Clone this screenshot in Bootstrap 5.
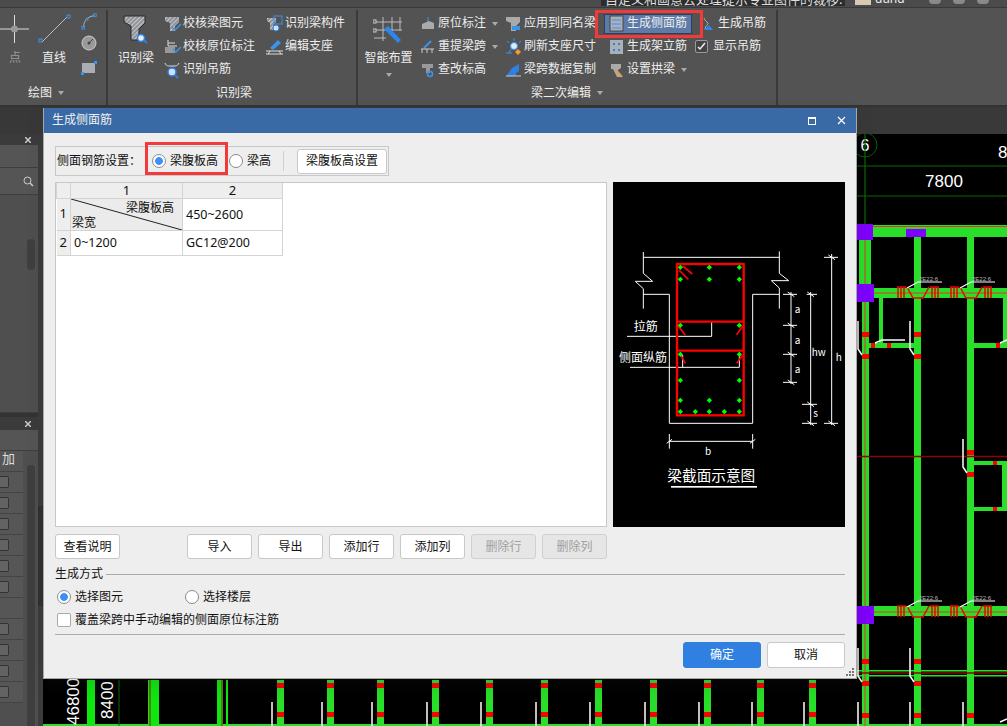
<!DOCTYPE html>
<html lang="zh-CN">
<head>
    <meta charset="UTF-8">
    <meta name="viewport" content="width=device-width, initial-scale=1.0">
    <title>生成侧面筋</title>
    <link href="https://cdn.jsdelivr.net/npm/bootstrap@5.3.0/dist/css/bootstrap.min.css" rel="stylesheet">
    <style>
        body { margin: 0; background: #000; font: 12px/1.2 "Noto Sans", "Noto Sans CJK SC", sans-serif; }
        .app { position: relative; width: 1007px; height: 726px; overflow: hidden; }

        /* ribbon */
        .ribbon { height: 107px; background: #535353; color: #eee; border-bottom: 2px solid #333; }
        .rb-top { height: 8px; background: #4b4b4b; border-bottom: 1px solid #383838; }
        .rb-notice { margin-left: 601px; width: 244px; height: 6px; background: #2d2d2d; overflow: hidden; color: #ddd; white-space: nowrap; }
        .rb-notice span { display: block; margin: -8px 0 0 4px; font-size: 13px; }
        .rb-avatar { width: 16px; height: 5px; margin-left: 10px; background: #d9c9b4; }
        .rb-user { margin: -8px 0 0 4px; font-size: 12px; }
        .rb-tool { width: 12px; height: 4px; background: #8a8a8a; margin-left: 12px; border-radius: 0 0 5px 5px; }
        .rb-group { height: 95px; border-right: 2px solid #3a3a3a; margin-top: 2px; }
        .rb-g1 { width: 108px; }
        .rb-g2 { width: 250px; }
        .rb-g3 { width: 420px; }
        .rb-body { height: 71px; flex: none; margin-top: 2px; }
        .rb-label { height: 20px; }
        .lb-g1 { padding-right: 14px; }
        .lb-g2 { padding-left: 4px; }
        .lb-g3 { padding-left: 173px; }
        .rb-arrow { width: 0; height: 0; border: 3px solid transparent; border-top: 4px solid #aaa; border-bottom: 0; margin-left: 6px; flex: none; }
        .rb-big { flex: none; }
        .rb-big span { margin-top: 7px; }
        .rb-row { height: 23px; white-space: nowrap; }
        .rb-row svg { flex: none; }
        .rb-ic { width: 18px; height: 18px; margin-right: 1px; }
        .rb-dim { color: #9a9a9a; }
        .w-pt { width: 30px; }
        .w-ln { width: 48px; }
        .w-sm { width: 22px; }
        .w-beam { width: 56px; }
        .w-c1 { width: 102px; }
        .w-smart { width: 61px; }
        .w-a { width: 86px; }
        .w-b { width: 103px; }
        .w-c { width: 88px; }
        .rb-hl { background: #5d7ba6; border: 1px solid #2d3f5c; height: 20px; margin-left: -4px; padding-left: 3px; width: 88px; }
        .rb-check { width: 13px; height: 13px; border: 1px solid #9a9a9a; border-radius: 2px; background: #444; margin-right: 5px; flex: none; }
        .rb-col4 { margin-left: -1px; }
        .rb-col4 .rb-ic { margin: 0 2px 0 3px; width: 14px; }

        /* red marks drawn over the shot */
        .red-frame { position: absolute; border: 3px solid #f23a3a; pointer-events: none; }
        .rf-ribbon { left: 595px; top: 10px; width: 108px; height: 28px; }
        .rf-radio { left: 145px; top: 142px; width: 83px; height: 33px; }

        /* left panels */
        .side { width: 43px; flex: none; background: #3c3c3c; color: #ddd; }
        .side-top { height: 27px; background: #383838; }
        .side-inner { width: 38px; background: #4f4f4f; }
        .side-head { height: 11px; background: #3b3b3b; padding-right: 7px; }
        .side-head-b { height: 13px; }
        .side-head svg { display: block; }
        .side-bar { background: #555; border-bottom: 1px solid #3e3e3e; }
        .side-h1 { height: 23px; }
        .side-h2 { height: 27px; }
        .side-h3 { height: 21px; }
        .side-fill { height: 218px; position: relative; border-bottom: 1px solid #3e3e3e; }
        .thumb { position: absolute; left: 27px; width: 8px; background: #3f3f3f; border-radius: 4px; }
        .thumb-a { top: 44px; height: 31px; }
        .thumb-b { top: 14px; height: 280px; }
        .side-gap { height: 4px; background: #333; }
        .side-list { position: relative; height: 275px; }
        .side-cell { height: 21px; width: 23px; border-bottom: 1px solid #444; background: #565656; }
        .side-cell i { display: block; width: 9px; height: 12px; background: #636363; border: 1px solid #333; border-left: 0; border-radius: 0 2px 2px 0; }
        .side-title { font-size: 13px; padding-left: 2px; height: 21px; }
        .side-handle { width: 5px; height: 100px; background: #303030; position: absolute; left: 38px; top: 506px; }

        /* canvas */
        .cad-wrap { flex: 1 1 auto; }
        .cad-band { height: 27px; background: #393939; }
        .cad { display: block; background: #000; }
        .cad text { font-family: "Liberation Sans", sans-serif; fill: #fff; }

        /* dialog */
        .dlg { position: absolute; left: 43px; top: 108px; width: 814px; height: 571px; background: #eee; border: 1px solid #a8a8a8; border-top: 0; color: #111; }
        .dlg-title { height: 25px; background: #3a6aa5; color: #f0f0f0; padding: 0 10px 0 8px; flex: none; }
        .dlg-body { padding: 13px 11px 0 11px; }
        .set-bar { height: 30px; width: 334px; border: 1px solid #c8c8c8; padding-left: 1px; }
        .set-sep { width: 1px; height: 20px; background: #d0d0d0; margin: 0 13px 0 12px; }
        .dlg .form-check-input { width: 14px; height: 14px; margin: 0 4px 0 0; flex: none; border-color: #8a8a8a; background: #fff; box-shadow: none; }
        .dlg .form-check-input:checked { background: radial-gradient(circle, #3f90f5 0 3.5px, #fff 4.2px); border-color: #8a8f99; }
        .dlg .form-check-input[type=checkbox] { border-radius: 2px; width: 14px; height: 14px; border-color: #aaa; }
        .dlg .lbl-gap { margin-left: 11px; }
        .dlg .btn { font-size: 12px; line-height: 1; padding: 0; height: 25px; color: #111; background: #fff; border: 1px solid #c8c8c8; border-radius: 3px; }
        .dlg .btn.disabled, .dlg .btn:disabled { background: #e6e6e6; color: #a0a0a0; border-color: #d0d0d0; opacity: 1; }
        .dlg .btn-primary { background: #2f80e0; border-color: #2f80e0; color: #fff; }
        .btn-set { width: 90px; }
        .btn-w65 { width: 65px; }
        .dlg .btn-w78 { width: 78px; height: 26px; }
        .main-row { height: 345px; margin-top: 6px; }
        .grid-box { width: 552px; background: #fff; border: 1px solid #c8c8c8; }
        .pic-box { width: 232px; background: #000; margin-left: 6px; }
        .pic-box svg { display: block; }
        .pic-box text { font-family: "Noto Sans CJK SC", sans-serif; fill: #fff; }
        .rb-table { width: 227px; table-layout: fixed; border-collapse: collapse; font-size: 12px; margin: 0; --bs-table-bg: transparent; }
        .rb-table th, .rb-table td { border: 1px solid #d4d4d4; padding: 0 3px; font-weight: 400; vertical-align: middle; color: #111; }
        .rb-table td { font-family: "Noto Sans", sans-serif; font-size: 12.5px; }
        .rb-table thead th { background: #eee; height: 15px; text-align: center; font-size: 13px; line-height: 1; padding: 0; border-top: 0; }
        .rb-table tbody th { background: #eee; text-align: center; padding: 0; font-size: 13px; border-left: 0; }
        .col-no { width: 14px; }
        .col-a { width: 112px; }
        .row-one { height: 32px; }
        .row-two { height: 25px; }
        .rb-table td.diag { position: relative; background: #ebebeb; padding: 0; font-family: "Noto Sans CJK SC", sans-serif; font-size: 12px; }
        .diag svg { position: absolute; inset: 0; }
        .diag-a { position: absolute; right: 8px; top: 1px; }
        .diag-b { position: absolute; left: 1px; bottom: 0; }
        .act-row { margin-top: 7px; gap: 6px; }
        .act-gap { margin-left: 61px; }
        .gen-head { margin-top: 8px; height: 15px; }
        .gen-head hr { flex: 1 1 auto; margin: 0 0 0 3px; border: 0; border-top: 1px solid #aaa; opacity: 1; }
        .gen-opts { margin-top: 8px; height: 14px; padding-left: 2px; }
        .dlg .gen-second { margin-left: 62px; }
        .gen-cover { margin-top: 9px; height: 14px; padding-left: 2px; }
        .gen-line { margin: 7px 0 0; border: 0; border-top: 1px solid #aaa; opacity: 1; }
        .gen-foot { margin-top: 7px; gap: 6px; }
        .grip { position: absolute; right: 2px; bottom: 2px; }
    </style>
</head>
<body>
<div class="app d-flex flex-column">

    <header class="ribbon flex-shrink-0">
        <div class="rb-top d-flex overflow-hidden">
            <div class="rb-notice"><span>自定义和画意去处理提示专业图件的裁移:</span></div>
            <div class="rb-avatar"></div>
            <div class="rb-user">dund</div>
            <div class="rb-tool ms-4"></div>
            <div class="rb-tool"></div>
            <div class="rb-tool"></div>
        </div>
        <div class="d-flex">
            <!-- 绘图 -->
            <section class="rb-group rb-g1 d-flex flex-column">
                <div class="rb-body d-flex">
                    <div class="rb-big w-pt d-flex flex-column align-items-center">
                        <svg width="30" height="32" viewBox="0 0 30 32"><path d="M0 17h29M14.500 3v28" stroke="#ddd"/><circle cx="14.500" cy="17" r="3.500" fill="#999"/></svg>
                        <span class="rb-dim">点</span>
                    </div>
                    <div class="rb-big w-ln d-flex flex-column align-items-center">
                        <svg width="36" height="32" viewBox="0 0 36 32"><path d="M6 30L31 5" stroke="#bbb"/><rect x="3" y="27" width="3" height="3" fill="none" stroke="#3a94ee"/><rect x="31" y="3" width="3" height="3" fill="none" stroke="#3a94ee"/></svg>
                        <span>直线</span>
                    </div>
                    <div class="w-sm d-flex flex-column align-items-center">
                        <svg width="18" height="18" viewBox="0 0 18 20"><path d="M3 17C3 9 8 5 15 4" stroke="#bbb" fill="none"/><rect x="1" y="16" width="3" height="3" fill="none" stroke="#3a94ee"/><rect x="14" y="2" width="3" height="3" fill="none" stroke="#3a94ee"/><rect x="6" y="7" width="2" height="2" fill="none" stroke="#3a94ee"/></svg>
                        <svg class="mt-1" width="18" height="18" viewBox="0 0 18 18"><circle cx="9" cy="9" r="7" fill="#999" stroke="#ccc"/><circle cx="9" cy="9" r="1.500" fill="#444"/><path d="M9 9l4-4" stroke="#444"/></svg>
                        <svg class="mt-2" width="18" height="16" viewBox="0 0 18 16"><rect x="2" y="3" width="13" height="10" fill="#a9adb5"/><rect x="14" y="1" width="3" height="3" fill="#3a94ee"/><rect x="1" y="12" width="3" height="3" fill="#3a94ee"/></svg>
                    </div>
                </div>
                <div class="rb-label lb-g1 d-flex align-items-center justify-content-center">绘图<i class="rb-arrow"></i></div>
            </section>

            <!-- 识别梁 -->
            <section class="rb-group rb-g2 d-flex flex-column">
                <div class="rb-body d-flex">
                    <div class="rb-big w-beam d-flex flex-column align-items-center">
                        <svg width="26" height="32" viewBox="0 0 26 32"><defs><pattern id="hatch" width="3" height="3" patternUnits="userSpaceOnUse" patternTransform="rotate(45)"><rect width="3" height="3" fill="#8f9298"/><rect width="1" height="3" fill="#c6c8cc"/></pattern></defs><path d="M1 4h21v7l-6 6v11H8V14L1 10z" fill="url(#hatch)" stroke="#2a2a2a"/><circle cx="18" cy="26" r="3.500" fill="#e6eefb" stroke="#2f80e0" stroke-width="1.500"/><path d="M21 28l3 3" stroke="#2f80e0" stroke-width="2"/></svg>
                        <span>识别梁</span>
                    </div>
                    <div class="w-c1 d-flex flex-column">
                        <div class="rb-row d-flex align-items-center"><svg class="rb-ic" viewBox="0 0 18 18"><path d="M1 2h14v5l-4 4v5H6V8L1 6z" fill="url(#hatch)"/><path d="M8 12l3 3 6-6" stroke="#3a94ee" stroke-width="1.500" fill="none"/></svg>校核梁图元</div>
                        <div class="rb-row d-flex align-items-center"><svg class="rb-ic" viewBox="0 0 18 18"><path d="M4 2v6h9M4 5h7" stroke="#ddd" fill="none"/><rect x="1" y="9" width="10" height="6" fill="#999"/><path d="M9 11l3 3 5-5" stroke="#3a94ee" stroke-width="1.500" fill="none"/></svg>校核原位标注</div>
                        <div class="rb-row d-flex align-items-center"><svg class="rb-ic" viewBox="0 0 18 18"><path d="M1 2c1 3 3 3 4 3h6c2 0 3-1 4-3" stroke="#ddd" fill="none"/><circle cx="8" cy="11" r="4" fill="#cfdff5" stroke="#2f80e0" stroke-width="1.500"/><path d="M11 14l3 3" stroke="#2f80e0" stroke-width="2"/></svg>识别吊筋</div>
                    </div>
                    <div class="d-flex flex-column">
                        <div class="rb-row d-flex align-items-center"><svg class="rb-ic" viewBox="0 0 18 18"><path d="M1 3h9v4l-3 3v5H4V8L1 6z" fill="url(#hatch)"/><rect x="8" y="1" width="8" height="8" fill="none" stroke="#3a94ee"/><circle cx="10" cy="13" r="3" fill="#cfdff5" stroke="#2f80e0"/></svg>识别梁构件</div>
                        <div class="rb-row d-flex align-items-center"><svg class="rb-ic" viewBox="0 0 18 18"><path d="M4 10l8-8 3 3-8 7z" fill="#3a94ee"/><path d="M0 13h17M0 16h17M4 13l-2 3M13 13l2 3" stroke="#ddd" fill="none"/></svg>编辑支座</div>
                    </div>
                </div>
                <div class="rb-label lb-g2 d-flex align-items-center justify-content-center">识别梁</div>
            </section>

            <!-- 梁二次编辑 -->
            <section class="rb-group rb-g3 d-flex flex-column">
                <div class="rb-body d-flex">
                    <div class="rb-big w-smart d-flex flex-column align-items-center">
                        <svg width="32" height="32" viewBox="0 -4 32 32"><path d="M1 6h28M1 14h28M1 22h12M10 1v24M19 1v14M27 1v14" stroke="#bbb" fill="none"/><rect x="0" y="4" width="3" height="3" fill="#555" stroke="#ccc"/><rect x="0" y="13" width="3" height="3" fill="#555" stroke="#ccc"/><path d="M11 13l4-3 13 14-3 3z" fill="#2f86e8"/></svg>
                        <span>智能布置</span>
                        <i class="rb-arrow mt-2 ms-0"></i>
                    </div>
                    <div class="w-a d-flex flex-column">
                        <div class="rb-row d-flex align-items-center"><svg class="rb-ic" viewBox="0 0 18 18"><path d="M9 2v6" stroke="#3a94ee"/><path d="M3 9l7-3 5 2v6H3z" fill="#aaa"/></svg>原位标注<i class="rb-arrow"></i></div>
                        <div class="rb-row d-flex align-items-center"><svg class="rb-ic" viewBox="0 0 18 18"><path d="M5 10l7-7" stroke="#3a94ee" stroke-width="2"/><path d="M2 11h13M3 11v4M8 11v4M13 11v4" stroke="#ccc" fill="none"/></svg>重提梁跨<i class="rb-arrow"></i></div>
                        <div class="rb-row d-flex align-items-center"><svg class="rb-ic" viewBox="0 0 18 18"><path d="M3 3h11v4h-3v5H7V7H3z" fill="#999"/><circle cx="11" cy="13" r="2.500" fill="none" stroke="#3a94ee" stroke-width="1.500"/></svg>查改标高</div>
                    </div>
                    <div class="w-b d-flex flex-column">
                        <div class="rb-row d-flex align-items-center"><svg class="rb-ic" viewBox="0 0 18 18"><path d="M1 2h14v5l-4 4v5H6V8L1 6z" fill="#aaa"/><path d="M7 11h8v4H7z" fill="#3a94ee"/></svg>应用到同名梁</div>
                        <div class="rb-row d-flex align-items-center"><svg class="rb-ic" viewBox="0 0 18 18"><circle cx="9" cy="8" r="3.500" fill="#ddeaff" stroke="#3a94ee"/><path d="M9 0v3M2 3l2 2M16 3l-2 2M1 15h6M4 15l2-4" stroke="#3a94ee" fill="none"/><path d="M13 11l3 3-3 3-3-3z" fill="#f39c2c"/></svg>刷新支座尺寸</div>
                        <div class="rb-row d-flex align-items-center"><svg class="rb-ic" viewBox="0 0 18 18"><path d="M2 14l5-7 7-4v7l-3 2v3H2z" fill="#2f80e0"/><path d="M1 15h15" stroke="#ccc"/></svg>梁跨数据复制</div>
                    </div>
                    <div class="w-c d-flex flex-column">
                        <div class="rb-row d-flex align-items-center"><div class="rb-hl d-flex align-items-center"><svg class="rb-ic" viewBox="0 0 18 18"><rect x="2" y="1" width="13" height="15" fill="#aab0b8" stroke="#444"/><path d="M4 5h9M4 9h9M4 13h9" stroke="#3f90f5"/></svg>生成侧面筋</div></div>
                        <div class="rb-row d-flex align-items-center"><svg class="rb-ic" viewBox="0 0 18 18"><rect x="2" y="2" width="13" height="14" fill="#aab0b8"/><path d="M5 5h2v2H5zM10 5h2v2h-2zM5 11h2v2H5zM10 11h2v2h-2z" fill="#2f80e0"/></svg>生成架立筋</div>
                        <div class="rb-row d-flex align-items-center"><svg class="rb-ic" viewBox="0 0 18 18"><path d="M3 3h10v4l-3 2v2l3 5H9L5 8H3z" fill="#aaa"/><path d="M8 9l6 7" stroke="#d8a050" stroke-width="2"/></svg>设置拱梁<i class="rb-arrow"></i></div>
                    </div>
                    <div class="rb-col4 d-flex flex-column">
                        <div class="rb-row d-flex align-items-center ps-1"><svg class="rb-ic" viewBox="0 0 14 18"><path d="M2 3c1 3 3 4 4 5s-3 3-3 6" stroke="#aaa" fill="none"/><path d="M2 15h9l-4-5z" fill="#2f86e8"/></svg>生成吊筋</div>
                        <div class="rb-row d-flex align-items-center"><span class="rb-check d-flex align-items-center justify-content-center"><svg width="9" height="9" viewBox="0 0 9 9"><path d="M1 5l2 2 5-6" stroke="#eee" stroke-width="1.500" fill="none"/></svg></span>显示吊筋</div>
                    </div>
                </div>
                <div class="rb-label lb-g3 d-flex align-items-center"><span>梁二次编辑</span><i class="rb-arrow"></i></div>
            </section>
        </div>
    </header>

    <div class="d-flex flex-grow-1">
        <aside class="side">
            <div class="side-top"></div>
            <div class="side-inner">
                <div class="side-head d-flex justify-content-end align-items-center"><svg width="6" height="6" viewBox="0 0 6 6"><path d="M0 0l6 6M6 0L0 6" stroke="#ccc" stroke-width="1.500"/></svg></div>
                <div class="side-bar side-h1"></div>
                <div class="side-bar side-h2 d-flex justify-content-end align-items-center pe-1"><svg width="11" height="11" viewBox="0 0 11 11"><circle cx="4.500" cy="4.500" r="3.500" fill="none" stroke="#ccc"/><path d="M7 7l3 3" stroke="#ccc" stroke-width="1.500"/></svg></div>
                <div class="side-fill"><div class="thumb thumb-a"></div></div>
                <div class="side-gap"></div>
                <div class="side-head side-head-b d-flex justify-content-end align-items-center"><svg width="6" height="6" viewBox="0 0 6 6"><path d="M0 0l6 6M6 0L0 6" stroke="#ccc" stroke-width="1.500"/></svg></div>
                <div class="side-bar side-h3"></div>
                <div class="side-list">
                    <div class="thumb thumb-b"></div>
                    <div class="side-cell side-title">加</div>
                    <div class="side-cell d-flex align-items-center"><i></i></div>
                    <div class="side-cell d-flex align-items-center"><i></i></div>
                    <div class="side-cell d-flex align-items-center"><i></i></div>
                    <div class="side-cell d-flex align-items-center"><i></i></div>
                    <div class="side-cell d-flex align-items-center"><i></i></div>
                    <div class="side-cell d-flex align-items-center"><i></i></div>
                    <div class="side-cell"></div>
                    <div class="side-cell d-flex align-items-center"><i></i></div>
                    <div class="side-cell d-flex align-items-center"><i></i></div>
                    <div class="side-cell d-flex align-items-center"><i></i></div>
                    <div class="side-cell d-flex align-items-center"><i></i></div>
                </div>
            </div>
        </aside>
        <div class="side-handle"></div>

        <main class="cad-wrap">
            <div class="cad-band"></div>
            <svg class="cad" width="964" height="592" viewBox="43 134 964 592">
                <defs>
                    <g id="trap">
                        <path d="M0 0h9M1 0v11M4 0v11M7 0v11M33 0h9M35 0v11M38 0v11M41 0v11M10 0l6 11h10l6-11" stroke="#f00200" stroke-width="1.500" fill="none"/>
                        <path d="M10 1l11-6h24" stroke="#fff" stroke-width="1.200" fill="none"/>
                        <text x="22" y="-6" font-size="6" style="fill:#bbb">2E22:6</text>
                    </g>
                    <g id="stub">
                        <rect x="0" y="0" width="7" height="5" fill="#f00"/>
                        <rect x="0" y="22" width="7" height="5" fill="#f00"/>
                        <path d="M-4 -11V17L0 23" stroke="#fff" stroke-width="1.500" fill="none"/>
                    </g>
                    <g id="foot">
                        <rect x="0" y="0" width="7" height="44" fill="#2adf2a"/>
                        <rect x="0" y="3" width="7" height="5" fill="#f00"/>
                        <rect x="0" y="32" width="7" height="5" fill="#f00"/>
                        <path d="M-5 22V46" stroke="#fff" stroke-width="1.500"/>
                    </g>
                </defs>

                <!-- axis marks -->
                <circle cx="865" cy="145" r="12" fill="none" stroke="#075f07"/>
                <text x="865" y="151" text-anchor="middle" font-size="16">6</text>
                <text x="998" y="158" font-size="17">8</text>
                <path d="M857 166H1007M857 196H1007M865 134V240" stroke="#0a6a0a" stroke-width="1.200"/>
                <text x="944" y="187" text-anchor="middle" font-size="17">7800</text>

                <!-- beams -->
                <g fill="#2adf2a">
                    <rect x="859" y="225" width="148" height="12"/>
                    <rect x="859" y="237" width="12" height="47"/>
                    <rect x="862" y="302" width="7" height="422"/>
                    <rect x="914" y="237" width="7" height="487"/>
                    <rect x="967" y="237" width="7" height="487"/>
                    <rect x="859" y="288" width="148" height="10"/>
                    <rect x="879" y="298" width="4" height="46"/>
                    <rect x="868" y="343" width="46" height="5"/>
                    <rect x="973" y="343" width="34" height="5"/>
                    <rect x="1003" y="298" width="4" height="46"/>
                    <rect x="973" y="461" width="34" height="4"/>
                    <rect x="973" y="507" width="34" height="4"/>
                    <rect x="1002" y="465" width="5" height="42"/>
                    <rect x="859" y="606" width="148" height="10"/>
                    <rect x="857" y="670" width="150" height="1.500"/>
                    <rect x="857" y="675" width="150" height="1.500"/>
                    <rect x="43" y="724" width="964" height="2"/>
                </g>
                <path d="M857 226.500H1007M857 293H1007M857 612H1007M865 237V726" stroke="#e83030" fill="none"/>
                <path d="M857 456.500H1007M857 673H1007" stroke="#8a0606" stroke-width="1.500"/>

                <g fill="#8000ff">
                    <rect x="857" y="224" width="16" height="16"/>
                    <rect x="906" y="229" width="20" height="8"/>
                    <rect x="857" y="284" width="17" height="18"/>
                    <rect x="857" y="606" width="17" height="18"/>
                </g>

                <use href="#trap" x="897" y="287"/>
                <use href="#trap" x="950" y="287"/>
                <use href="#trap" x="897" y="606"/>
                <use href="#trap" x="950" y="606"/>

                <use href="#stub" x="862" y="332"/>
                <use href="#stub" x="914" y="332"/>
                <use href="#stub" x="967" y="450"/>
                <use href="#stub" x="862" y="659"/>
                <use href="#stub" x="914" y="659"/>
                <g fill="#f00">
                    <rect x="871" y="343" width="4" height="5"/>
                    <rect x="887" y="343" width="4" height="5"/>
                    <rect x="996" y="343" width="4" height="5"/>
                    <rect x="993" y="461" width="4" height="4"/>
                    <rect x="993" y="507" width="4" height="4"/>
                    <rect x="862" y="713" width="7" height="5"/>
                    <rect x="914" y="713" width="7" height="5"/>
                    <rect x="967" y="713" width="7" height="5"/>
                </g>
                <path d="M875 343l7-3h23M1000 343l7-3M963 702V726M910 702V726M858 702V726M1000 722l7-3" stroke="#fff" stroke-width="1.500" fill="none"/>

                <!-- strip under the dialog -->
                <g fill="#0fe80f">
                    <rect x="87" y="680" width="8" height="46"/>
                    <rect x="148" y="680" width="11" height="46"/>
                    <rect x="217" y="680" width="6" height="46"/>
                    <rect x="226" y="680" width="2" height="46"/>
                </g>
                <path d="M119 680V726" stroke="#0a6a0a"/>
                <path d="M150 680V726M222 680V726" stroke="#a01010"/>
                <use href="#foot" x="277" y="680"/>
                <use href="#foot" x="327" y="680"/>
                <use href="#foot" x="377" y="680"/>
                <use href="#foot" x="432" y="680"/>
                <use href="#foot" x="486" y="680"/>
                <use href="#foot" x="541" y="680"/>
                <use href="#foot" x="595" y="680"/>
                <use href="#foot" x="650" y="680"/>
                <use href="#foot" x="704" y="680"/>
                <use href="#foot" x="757" y="680"/>
                <use href="#foot" x="809" y="680"/>
                <text transform="translate(79 725) rotate(-90)" font-size="17">46800</text>
                <text transform="translate(113 719) rotate(-90)" font-size="17">8400</text>
            </svg>
        </main>
    </div>

    <!-- dialog -->
    <div class="dlg d-flex flex-column shadow">
        <div class="dlg-title d-flex align-items-center justify-content-between">
            <span>生成侧面筋</span>
            <span class="d-flex align-items-center gap-3">
                <svg width="10" height="10" viewBox="0 0 10 10"><rect x="1.500" y="1.500" width="7" height="7" fill="none" stroke="#fff"/><path d="M1 2h8" stroke="#fff" stroke-width="2"/></svg>
                <svg class="ms-1" width="9" height="9" viewBox="0 0 9 9"><path d="M1 1l7 7M8 1L1 8" stroke="#fff" stroke-width="1.200"/></svg>
            </span>
        </div>
        <div class="dlg-body">
            <div class="set-bar d-flex align-items-center">
                <span>侧面钢筋设置：</span>
                <input class="form-check-input lbl-gap" type="radio" name="mode" checked>
                <span>梁腹板高</span>
                <input class="form-check-input lbl-gap" type="radio" name="mode">
                <span>梁高</span>
                <span class="set-sep"></span>
                <button class="btn btn-set" type="button">梁腹板高设置</button>
            </div>

            <div class="main-row d-flex">
                <div class="grid-box">
                    <table class="table rb-table">
                        <colgroup><col class="col-no"><col class="col-a"><col></colgroup>
                        <thead><tr><th></th><th>1</th><th>2</th></tr></thead>
                        <tbody>
                            <tr class="row-one">
                                <th>1</th>
                                <td class="diag">
                                    <svg width="100%" height="100%" viewBox="0 0 100 100" preserveAspectRatio="none"><path d="M0 0L100 100" stroke="#222" vector-effect="non-scaling-stroke"/></svg>
                                    <span class="diag-a">梁腹板高</span><span class="diag-b">梁宽</span>
                                </td>
                                <td>450~2600</td>
                            </tr>
                            <tr class="row-two"><th>2</th><td>0~1200</td><td>GC12@200</td></tr>
                        </tbody>
                    </table>
                </div>
                <div class="pic-box">
                    <svg width="232" height="345" viewBox="9 -144 696 1035">
                        <defs><path id="dot" d="M0 -8L8 0L0 8L-8 0z" fill="#0f0"/></defs>
                        <g fill="none" stroke="#fff" stroke-width="3">
                            <path d="M100 66V130L128 154H76L100 176V236M508 64V130L536 152H484L508 174V236M100 82H508"/>
                            <path d="M100 193H178V580H428V193H508"/>
                            <path d="M51 319H305V275M60 412H388V375M218 412V375"/>
                            <path d="M543 186V462M519 193H561M519 286H561M519 373H561M519 457H561"/>
                            <path d="M602 186V585M590 193H621M576 523H621M576 580H621"/>
                            <path d="M665 72V585M642 82H684M642 580H684"/>
                            <path d="M178 634H428M178 612V656M428 612V656"/>
                            <path d="M533 186l20 14M533 279l20 14M533 366l20 14M533 450l20 14M592 186l20 14M592 516l20 14M592 573l20 14M655 75l20 14M655 573l20 14M170 640l16-12M420 640l16-12"/>
                        </g>
                        <g fill="none" stroke="#f00" stroke-width="7">
                            <rect x="201" y="102" width="200" height="454"/>
                            <path d="M201 275H401M201 362H401"/>
                        </g>
                        <path d="M207 120l28 28M218 108l29 24M205 288l21 28M398 288l-18 26M212 375l14 25M398 375l-18 25" stroke="#f00" stroke-width="5" fill="none"/>
                        <use href="#dot" x="211" y="112"/><use href="#dot" x="298" y="112"/><use href="#dot" x="388" y="112"/>
                        <use href="#dot" x="211" y="148"/><use href="#dot" x="298" y="148"/><use href="#dot" x="388" y="148"/>
                        <use href="#dot" x="211" y="286"/><use href="#dot" x="388" y="286"/>
                        <use href="#dot" x="211" y="373"/><use href="#dot" x="388" y="373"/>
                        <use href="#dot" x="211" y="451"/><use href="#dot" x="388" y="451"/>
                        <use href="#dot" x="211" y="511"/><use href="#dot" x="298" y="511"/><use href="#dot" x="388" y="511"/>
                        <use href="#dot" x="211" y="545"/><use href="#dot" x="256" y="545"/><use href="#dot" x="298" y="545"/><use href="#dot" x="343" y="545"/><use href="#dot" x="388" y="545"/>
                        <text x="71" y="303" font-size="36">拉筋</text>
                        <text x="27" y="396" font-size="36">侧面纵筋</text>
                        <g font-size="30" style="font-family:'Liberation Mono',monospace">
                            <text x="554" y="248">a</text><text x="554" y="341">a</text><text x="554" y="428">a</text>
                            <text x="605" y="378">hw</text><text x="610" y="561">s</text><text x="677" y="392">h</text><text x="285" y="675">b</text>
                        </g>
                        <text x="172" y="753" font-size="44">梁截面示意图</text>
                        <rect x="183" y="768" width="258" height="5" fill="#fff"/>
                    </svg>
                </div>
            </div>

            <div class="act-row d-flex">
                <button class="btn btn-w65" type="button">查看说明</button>
                <button class="btn btn-w65 act-gap" type="button">导入</button>
                <button class="btn btn-w65" type="button">导出</button>
                <button class="btn btn-w65" type="button">添加行</button>
                <button class="btn btn-w65" type="button">添加列</button>
                <button class="btn btn-w65" type="button" disabled>删除行</button>
                <button class="btn btn-w65" type="button" disabled>删除列</button>
            </div>

            <div class="gen-head d-flex align-items-center"><span>生成方式</span><hr></div>
            <div class="gen-opts d-flex align-items-center">
                <input class="form-check-input" type="radio" name="scope" checked>
                <span>选择图元</span>
                <input class="form-check-input gen-second" type="radio" name="scope">
                <span>选择楼层</span>
            </div>
            <div class="gen-cover d-flex align-items-center">
                <input class="form-check-input" type="checkbox">
                <span>覆盖梁跨中手动编辑的侧面原位标注筋</span>
            </div>
            <hr class="gen-line">
            <div class="gen-foot d-flex justify-content-end">
                <button class="btn btn-primary btn-w78" type="button">确定</button>
                <button class="btn btn-w78" type="button">取消</button>
            </div>
        </div>
        <svg class="grip" width="8" height="8" viewBox="0 0 8 8"><path d="M6 0h2v2H6zM3 3h2v2H3zM6 3h2v2H6zM0 6h2v2H0zM3 6h2v2H3zM6 6h2v2H6z" fill="#777"/></svg>
    </div>

    <div class="red-frame rf-ribbon"></div>
    <div class="red-frame rf-radio"></div>
</div>
<script src="https://cdn.jsdelivr.net/npm/bootstrap@5.3.0/dist/js/bootstrap.bundle.min.js"></script>
</body>
</html>
